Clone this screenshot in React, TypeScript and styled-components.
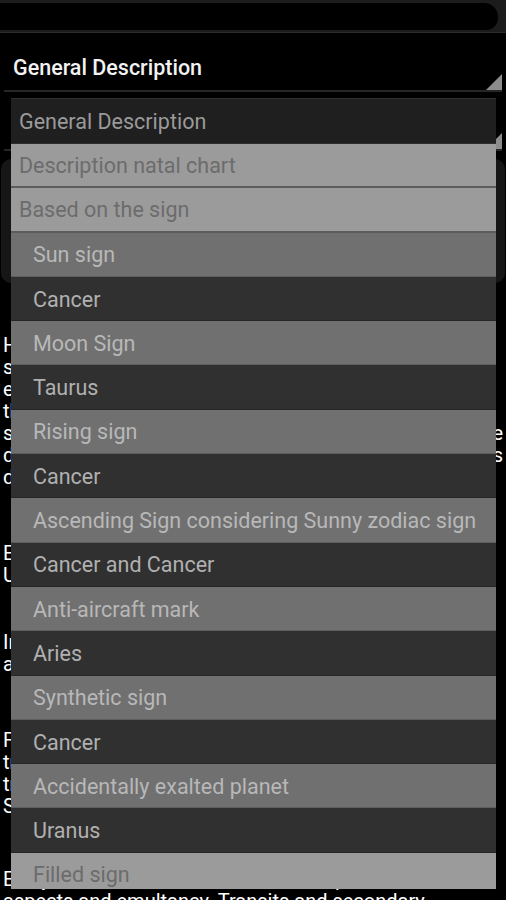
import React from "react";
import styled, { createGlobalStyle } from "styled-components";

type Tone = "head" | "light" | "mid" | "dark";

interface Item {
  label: string;
  tone: Tone;
  sub?: boolean;
}

const items: Item[] = [
  { label: "General Description", tone: "head" },
  { label: "Description natal chart", tone: "light" },
  { label: "Based on the sign", tone: "light" },
  { label: "Sun sign", tone: "mid", sub: true },
  { label: "Cancer", tone: "dark", sub: true },
  { label: "Moon Sign", tone: "mid", sub: true },
  { label: "Taurus", tone: "dark", sub: true },
  { label: "Rising sign", tone: "mid", sub: true },
  { label: "Cancer", tone: "dark", sub: true },
  { label: "Ascending Sign considering Sunny zodiac sign", tone: "mid", sub: true },
  { label: "Cancer and Cancer", tone: "dark", sub: true },
  { label: "Anti-aircraft mark", tone: "mid", sub: true },
  { label: "Aries", tone: "dark", sub: true },
  { label: "Synthetic sign", tone: "mid", sub: true },
  { label: "Cancer", tone: "dark", sub: true },
  { label: "Accidentally exalted planet", tone: "mid", sub: true },
  { label: "Uranus", tone: "dark", sub: true },
  { label: "Filled sign", tone: "light", sub: true },
];

// lines of the description text behind the popup; fill = line runs to the right edge
const paragraphs: { gap: number; lines: { text: string; fill?: boolean }[] }[] = [
  {
    gap: 54,
    lines: [
      { text: "Here you will find the general description of your" },
      { text: "sign, with a detailed reading of the planets," },
      { text: "elements and aspects that make up the chart of" },
      { text: "the moment of your birth. The description of the" },
      { text: "sun sign and the rising sign is based on the date", fill: true },
      { text: "delivered by the user and the chosen options", fill: true },
      { text: "described in the settings menu." },
    ],
  },
  {
    gap: 45,
    lines: [
      { text: "Each of the planets is interpreted according to" },
      { text: "Uranus and the house it occupies." },
    ],
  },
  {
    gap: 54,
    lines: [
      { text: "In this section you will also find" },
      { text: "a list of the dominant signs." },
    ],
  },
  {
    gap: 51,
    lines: [
      { text: "For a complete reading, check the" },
      { text: "transits of the planets and their" },
      { text: "transits over the natal houses." },
      { text: "Solar return and progressions." },
    ],
  },
  {
    gap: 0,
    lines: [
      { text: "Every chart also includes the most important" },
      { text: "aspects and emultancy. Transits and secondary" },
      { text: "progressions are calculated as well." },
    ],
  },
];

const App: React.FC = () => {
  return (
    <Screen>
      <GlobalStyle />
      <TopBar>
        <Blot />
      </TopBar>
      <Spinner>General Description</Spinner>
      <Spinner>Description natal chart</Spinner>
      <ButtonPanel />
      <Body>
        {paragraphs.map((p, i) => (
          <Paragraph key={i} $gap={p.gap}>
            {p.lines.map((l, j) => (
              <Line key={j} $fill={l.fill}>
                {l.text}
              </Line>
            ))}
          </Paragraph>
        ))}
      </Body>

      <Popup>
        {items.map((it, i) => (
          <Row key={i} $tone={it.tone} $sub={it.sub}>
            {it.label}
          </Row>
        ))}
      </Popup>
    </Screen>
  );
};

export default App;

const GlobalStyle = createGlobalStyle`
  html, body {
    margin: 0;
    padding: 0;
    background: #000;
  }
  body {
    font-family: Roboto, "Open Sans", "DejaVu Sans", sans-serif;
    overflow: hidden;
  }
`;

const Screen = styled.div`
  position: relative;
  width: 506px;
  height: 900px;
  overflow: hidden;
  background: #000;
`;

const TopBar = styled.div`
  height: 33px;
  background: #1c1c1c;
  border-bottom: 1px solid #2c2c2c;
  padding-top: 3px;
  box-sizing: border-box;
`;

const Blot = styled.div`
  width: 498px;
  height: 27px;
  background: #000;
  border-radius: 0 14px 12px 0;
`;

const Spinner = styled.div`
  position: relative;
  height: 59px;
  margin: 0 4px;
  padding: 11px 9px 0;
  box-sizing: border-box;
  display: flex;
  align-items: center;
  border-bottom: 2px solid #262626;
  color: #f2f2f2;
  font-size: 21.5px;
  font-weight: 500;

  &::after {
    content: "";
    position: absolute;
    right: 0;
    bottom: 0;
    width: 0;
    height: 0;
    border-left: 16px solid transparent;
    border-bottom: 16px solid #8c8c8c;
  }
`;

const ButtonPanel = styled.div`
  height: 124px;
  margin: 8px 1px 0;
  background: #161616;
  border-radius: 10px;
`;

const Body = styled.div`
  padding: 51px 3px 0;
  color: #fff;
  font-size: 20px;
  line-height: 22px;
`;

const Paragraph = styled.div<{ $gap: number }>`
  margin-bottom: ${(p) => p.$gap}px;
`;

const Line = styled.div<{ $fill?: boolean }>`
  white-space: nowrap;
  text-align: ${(p) => (p.$fill ? "justify" : "left")};
  text-align-last: ${(p) => (p.$fill ? "justify" : "auto")};
`;

const Popup = styled.div`
  position: absolute;
  top: 98px;
  left: 11px;
  width: 485px;
  height: 791px;
  overflow: hidden;
  background: #2f2f2f;
`;

const toneBg: Record<Tone, string> = {
  head: "#1f1f1f",
  light: "#9b9b9b",
  mid: "#707070",
  dark: "#303030",
};

const toneText: Record<Tone, string> = {
  head: "#9a9a9a",
  light: "#6c6c6c",
  mid: "#b8b8b8",
  dark: "#b0b0b0",
};

const toneLine: Record<Tone, string> = {
  head: "#2c2c2c",
  light: "#5c5c5c",
  mid: "#5e5e5e",
  dark: "#262626",
};

const Row = styled.div<{ $tone: Tone; $sub?: boolean }>`
  height: ${(p) => (p.$tone === "head" ? 46 : 44.3)}px;
  box-sizing: border-box;
  display: flex;
  align-items: center;
  padding-left: ${(p) => (p.$sub ? 22 : 8)}px;
  padding-top: 1px;
  background: ${(p) => toneBg[p.$tone]};
  color: ${(p) => toneText[p.$tone]};
  border-bottom: ${(p) => (p.$tone === "light" ? 2 : 1)}px solid ${(p) => toneLine[p.$tone]};
  border-top: ${(p) => (p.$tone === "head" ? "1px solid #303030" : "none")};
  font-size: 21.5px;
  white-space: nowrap;
`;
